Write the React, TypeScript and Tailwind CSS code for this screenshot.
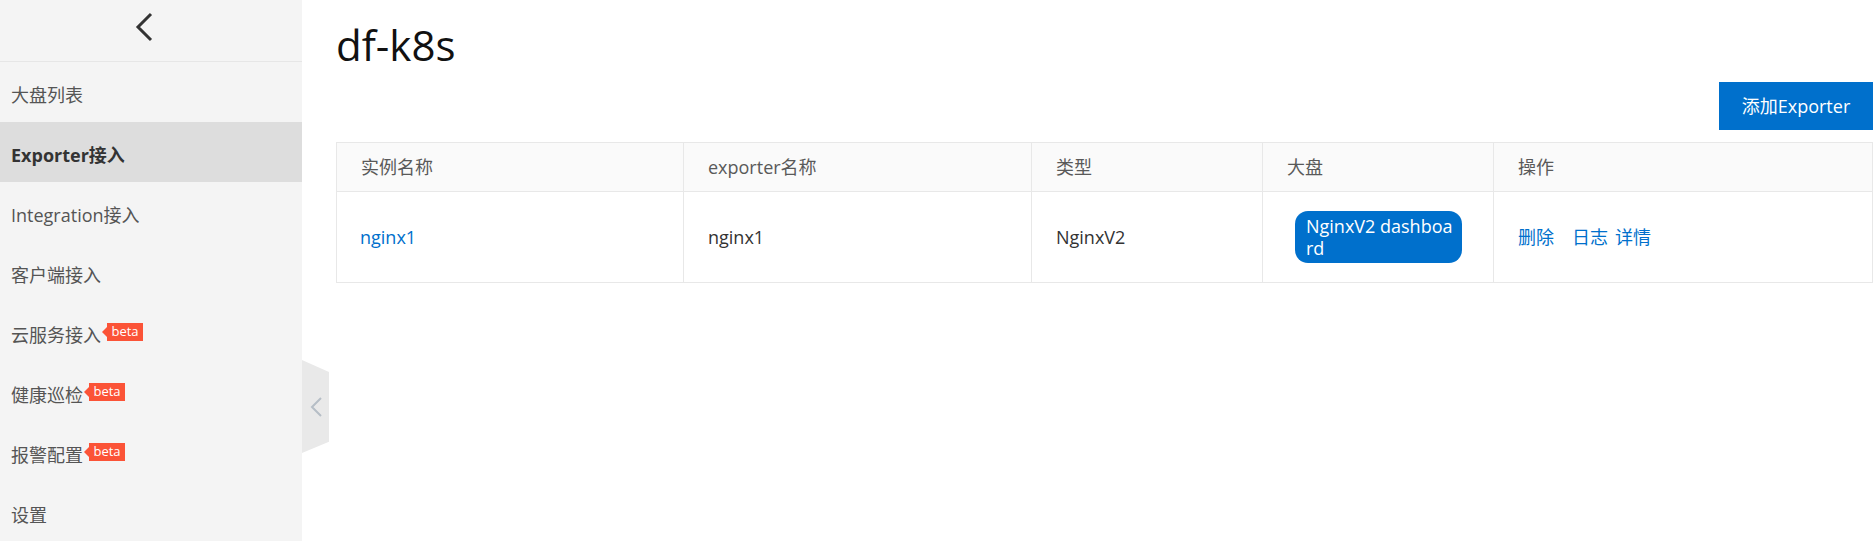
import React from 'react'

const font = "font-['Segoe_UI','Open_Sans','Noto_Sans','Noto_Sans_CJK_SC',sans-serif]"

const menu = [
  { label: '大盘列表' },
  { label: 'Exporter接入', active: true },
  { label: 'Integration接入' },
  { label: '客户端接入' },
  { label: '云服务接入', beta: true },
  { label: '健康巡检', beta: true },
  { label: '报警配置', beta: true },
  { label: '设置' },
]

const Beta = () => (
  <span className="relative -top-[4px] ml-[1px] flex items-center">
    <span className="h-0 w-0 border-y-[5px] border-r-[5px] border-y-transparent border-r-[#fb5337]"></span>
    <span className="flex h-[18px] w-[36px] items-center justify-center bg-[#fb5337] text-[13px] leading-none text-white">beta</span>
  </span>
)

const Sidebar = () => (
  <div className="flex h-full w-[302px] shrink-0 flex-col bg-[#f4f4f4]">
    <div className="flex h-[62px] shrink-0 justify-center border-b border-[#e6e6e6] pr-[14px] pt-[12px]">
      <svg width="20" height="30" viewBox="0 0 20 30" fill="none">
        <path d="M17 2 L4 15 L17 28" stroke="#333" strokeWidth="3" />
      </svg>
    </div>
    {menu.map((m) => (
      <div
        key={m.label}
        className={
          'flex h-[60px] shrink-0 items-center pl-[11px] pt-[7px] text-[18px] ' +
          (m.active ? 'bg-[#dddddd] font-bold text-[#333]' : 'text-[#555]')
        }
      >
        <span>{m.label}</span>
        {m.beta && <Beta />}
      </div>
    ))}
  </div>
)

export default function App() {
  return (
    <div className={`flex h-[541px] w-full overflow-hidden bg-white ${font}`}>
      <Sidebar />
      <div className="relative flex-1 pl-[34px] pr-[3px]">
        <div className="absolute left-0 top-[360px] flex h-[93px] w-[27px] items-center justify-center bg-[#e9e9e9] [clip-path:polygon(0_0,100%_13%,100%_88%,0_100%)]">
          <svg width="12" height="20" viewBox="0 0 12 20" fill="none">
            <path d="M11 1 L2 10 L11 19" stroke="#b6bec6" strokeWidth="2" />
          </svg>
        </div>

        <h1 className="mt-[18px] text-[42px] font-medium leading-[54px] text-[#111]">df-k8s</h1>

        <div className="mt-[10px] flex justify-end">
          <button className="h-[48px] w-[154px] bg-[#0070cc] text-[18px] text-white">添加Exporter</button>
        </div>

        <table className="mt-[12px] w-[1536px] table-fixed border-collapse border border-[#e8e8e8] text-[18px]">
          <colgroup>
            <col className="w-[347px]" />
            <col className="w-[348px]" />
            <col className="w-[231px]" />
            <col className="w-[231px]" />
            <col className="w-[379px]" />
          </colgroup>
          <thead>
            <tr className="h-[49px] bg-[#fafafa] text-left text-[#595959]">
              <th className="border border-[#e8e8e8] pl-[24px] font-normal">实例名称</th>
              <th className="border border-[#e8e8e8] pl-[24px] font-normal">exporter名称</th>
              <th className="border border-[#e8e8e8] pl-[24px] font-normal">类型</th>
              <th className="border border-[#e8e8e8] pl-[24px] font-normal">大盘</th>
              <th className="border border-[#e8e8e8] pl-[24px] font-normal">操作</th>
            </tr>
          </thead>
          <tbody>
            <tr className="h-[91px] text-[#333]">
              <td className="border border-[#e8e8e8] pl-[23px] text-[#0070cc]">nginx1</td>
              <td className="border border-[#e8e8e8] pl-[24px]">nginx1</td>
              <td className="border border-[#e8e8e8] pl-[24px]">NginxV2</td>
              <td className="border border-[#e8e8e8] pl-[32px]">
                <div className="w-[167px] whitespace-nowrap rounded-[13px] bg-[#0070cc] px-[11px] py-[4px] leading-[22px] text-white">
                  NginxV2 dashboa<br />rd
                </div>
              </td>
              <td className="border border-[#e8e8e8] pl-[24px] text-[#0070cc]">
                <span className="mr-[18px]">删除</span>
                <span className="mr-[7px]">日志</span>
                <span>详情</span>
              </td>
            </tr>
          </tbody>
        </table>
      </div>
    </div>
  )
}
